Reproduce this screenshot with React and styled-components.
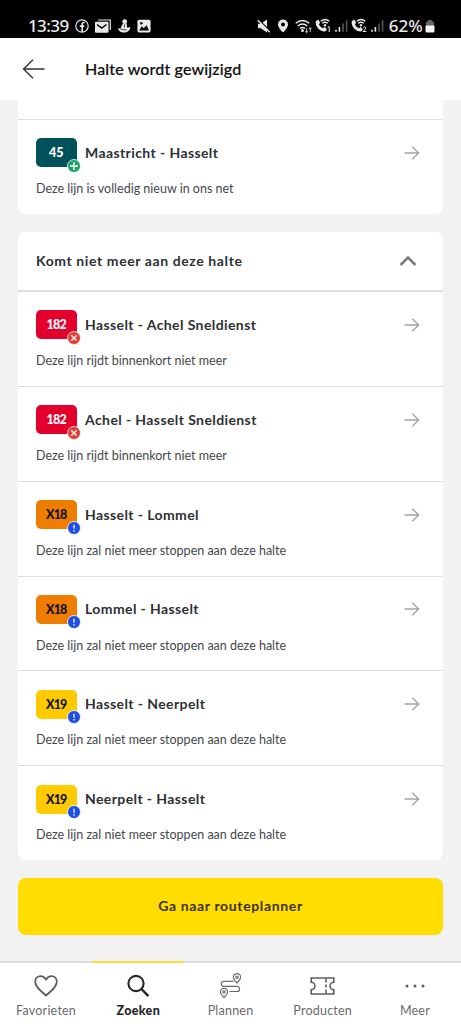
import React from "react";
import styled, { createGlobalStyle } from "styled-components";

const Global = createGlobalStyle`
  * { box-sizing: border-box; }
  body { margin: 0; background: #f2f2f2; font-family: Lato, "Noto Sans", sans-serif; color: #2d3035; }
  svg { display: block; flex: none; }
`;

const Screen = styled.div`
  width: 461px; height: 1024px; display: flex; flex-direction: column;
  overflow: hidden; background: #f2f2f2;
`;
const StatusBar = styled.div`
  flex: none; height: 37.5px; background: #000; color: #e8e8e8; display: flex;
  align-items: center; justify-content: space-between; padding: 14px 26px 0 28px;
`;
const StatusGroup = styled.div`display: flex; align-items: center; gap: ${(p) => p.$gap}px;`;
const StatusText = styled.span`
  font: 500 17px/22px "Noto Sans", sans-serif; letter-spacing: ${(p) => p.$track || 0}px; white-space: nowrap;
  margin: 0 ${(p) => p.$after || 0}px 0 ${(p) => p.$before || 0}px;
`;
const Header = styled.header`
  flex: none; height: 62.2px; background: #fff; display: flex; align-items: center; padding-left: 22px; gap: 40px;
`;
const Title = styled.h1`
  margin: 0; font-size: 16px; line-height: 22px; font-weight: 500; color: #111; letter-spacing: 0.15px;
  -webkit-text-stroke: 0.2px #111;
`;
const Content = styled.main`flex: 1; min-height: 0; overflow: hidden; padding: 0 18px;`;
const Scroller = styled.div`margin-top: -74.65px; display: flex; flex-direction: column; gap: 18.3px;`;
const Card = styled.section`background: #fff; border-radius: 8px; overflow: hidden;`;
const CardHeader = styled.div`
  height: 60px; border-bottom: 2px solid #dedede; display: flex; align-items: center;
  justify-content: space-between; padding: 0 26px 0 18px;
`;
const CardTitle = styled.h2`
  margin: 0; font-size: 14px; line-height: 20px; font-weight: 700; letter-spacing: 0.6px;
`;
const Row = styled.div`
  height: 94.85px; padding: 18.4px 23px 0 18px; border-bottom: 1px solid #dedede;
  &:last-child { height: 93.85px; border-bottom: 0; }
`;
const RowTop = styled.div`display: flex; align-items: center; height: 29px;`;
const Badge = styled.div`
  position: relative; width: 40.5px; height: 29px; border-radius: 5px; margin-right: 8.5px; flex: none;
  display: flex; align-items: center; justify-content: center; font-size: 12.5px; font-weight: 900;
  letter-spacing: ${(p) => p.$track}px;
  background: ${(p) => p.$bg}; color: ${(p) => p.$fg};
`;
const Mark = styled.span`position: absolute; left: 31.2px; top: 20.5px;`;
const RowTitle = styled.div`
  flex: 1; font-size: 14px; line-height: 20px; font-weight: 700; letter-spacing: 0.4px; white-space: nowrap;
`;
const Note = styled.div`
  margin-top: 12.7px; font-size: 12.5px; line-height: 18px; color: #45484c; white-space: nowrap;
`;
const Button = styled.button`
  height: 56.5px; border: 0; border-radius: 8px; background: #ffdd00; color: #3a3020;
  font: 700 14px/20px Lato, sans-serif; letter-spacing: 0.65px; padding: 0 0 1px;
`;
const Nav = styled.nav`flex: none; height: 62.8px; display: flex; background: #fff;`;
const NavItem = styled.div`
  flex: 1; border-top: 2.4px solid ${(p) => (p.$active ? "#f5de38" : "#dedede")}; display: flex;
  flex-direction: column; align-items: center; padding-top: 10px;
  color: ${(p) => (p.$active ? "#22262b" : "#6b6b6b")};
`;
const NavIcon = styled.div`height: 26px; display: flex; align-items: center;`;
const NavLabel = styled.span`
  font-size: 12.5px; line-height: 18px; margin-top: 2.5px; white-space: nowrap;
  font-weight: ${(p) => (p.$active ? 900 : 400)}; letter-spacing: ${(p) => (p.$active ? 0.35 : 0.22)}px;
`;

const markColors = { plus: "#22a06b", cross: "#e63b35", info: "#1d4ee8" };
function StatusMark({ kind }) {
  return (
    <Mark>
      <svg width="14" height="14" viewBox="0 0 14 14" fill="none" stroke="#fff">
        <circle cx="7" cy="7" r="6.5" fill={markColors[kind]} strokeWidth="0.8" />
        {kind === "plus" && <path d="M7 3v8M3 7h8" strokeWidth="1.3" />}
        {kind === "cross" && <path d="m4.2 4.2 5.6 5.6m0-5.6L4.2 9.8" strokeWidth="1.3" />}
        {kind === "info" && <path d="M7 3.7v4.1M7 9v1.4" strokeWidth="1.3" />}
      </svg>
    </Mark>
  );
}

const Arrow = () => (
  <svg width="16" height="14" viewBox="0 0 16 14" fill="none" stroke="#a3a3a3" strokeWidth="1.3">
    <path d="M.5 7h14M8.3.7 14.7 7l-6.4 6.3" />
  </svg>
);

const palette = {
  teal: ["#00525a", "#fff"],
  red: ["#e4002c", "#fff"],
  orange: ["#ef7d00", "#161310"],
  yellow: ["#ffcb00", "#161310"],
};

function Line({ number, color, mark, title, note }) {
  return (
    <Row>
      <RowTop>
        <Badge $bg={palette[color][0]} $fg={palette[color][1]} $track={number.length > 2 ? -0.8 : 0}>
          {number}
          <StatusMark kind={mark} />
        </Badge>
        <RowTitle>{title}</RowTitle>
        <Arrow />
      </RowTop>
      <Note>{note}</Note>
    </Row>
  );
}

const NEW = "Deze lijn is volledig nieuw in ons net";
const GONE = "Deze lijn rijdt binnenkort niet meer";
const SKIP = "Deze lijn zal niet meer stoppen aan deze halte";

const removed = [
  ["182", "red", "cross", "Hasselt - Achel Sneldienst", GONE],
  ["182", "red", "cross", "Achel - Hasselt Sneldienst", GONE],
  ["X18", "orange", "info", "Hasselt - Lommel", SKIP],
  ["X18", "orange", "info", "Lommel - Hasselt", SKIP],
  ["X19", "yellow", "info", "Hasselt - Neerpelt", SKIP],
  ["X19", "yellow", "info", "Neerpelt - Hasselt", SKIP],
];

const CallIcon = ({ n }) => (
  <svg width="17" height="15" viewBox="0 0 17 15" fill="none" stroke="#e8e8e8">
    <path d="M.8 3.200 3.200 1.600l2 3.200-1.300 1.400c.9 2 2.200 3.200 4 4l1.700-1.200 2.400 2.300-1.800 2.200C4.800 13.900-.2 8.500.8 3.200Z" fill="#e8e8e8" stroke="none" />
    <path d="M5.700 3.200q4.300-3.500 8.600 0M7.200 5.300q2.800-2.200 5.600 0" strokeWidth="1.400" />
    <circle cx="10" cy="7.200" r="1.200" fill="#e8e8e8" stroke="none" />
    {n === 1 ? <path d="M12.800 9.400 14.200 8.600V14" strokeWidth="1" /> : <path d="M12.200 9.500q1.600-1.400 2.600 0 .3 1-2.700 4h3.200" strokeWidth="1" />}
  </svg>
);
const Signal = () => (
  <svg width="13" height="13" viewBox="0 0 13 13" strokeWidth="1.600">
    <path d="M1 10.700v2M4.400 8v4.700" stroke="#e8e8e8" />
    <path d="M8 4.500v8.200M11.600 1v11.700" stroke="#555" />
  </svg>
);

const navItems = [
  ["Favorieten", (
    <svg width="26" height="24" viewBox="0 0 26 24" fill="none" stroke="#5d5d5d" strokeWidth="1.800" strokeLinejoin="round">
      <path d="M13 21.500C7.500 16.800 2.200 12.800 2.200 7.700 2.200 4.500 4.500 2.200 7.500 2.200c2.400 0 4.200 1.100 5.500 3.400 1.300-2.300 3.100-3.400 5.500-3.400 3 0 5.300 2.300 5.300 5.500 0 5.100-5.300 9.100-10.800 13.800Z" />
    </svg>
  )],
  ["Zoeken", (
    <svg width="24" height="24" viewBox="0 0 24 24" fill="none" stroke="#22262b" strokeWidth="2.100">
      <circle cx="10" cy="9.500" r="7.600" /><path d="m15.400 15 7 7.200" strokeWidth="2.500" />
    </svg>
  )],
  ["Plannen", (
    <svg width="24" height="26" viewBox="0 0 24 26" fill="none" stroke="#6b6b6b" strokeWidth="1.200">
      <path d="M14.500 8.300H4.700a2.500 2.500 0 0 0 0 5H18a2.600 2.600 0 0 1 0 5.200H10.500" />
      <path d="M18 10c-2-2.200-3.600-3.900-3.600-5.800a3.600 3.600 0 0 1 7.200 0C21.600 6.100 20 7.800 18 10ZM5 24.500c-2-2.200-3.600-3.800-3.600-5.600a3.600 3.600 0 0 1 7.200 0c0 1.800-1.600 3.400-3.600 5.600Z" />
      <circle cx="18" cy="4.200" r="1.200" /><circle cx="5" cy="19" r="1.200" />
    </svg>
  )],
  ["Producten", (
    <svg width="25" height="18" viewBox="0 0 25 18" fill="none" stroke="#5d5d5d" strokeWidth="1.600">
      <path d="M1.200 1h22.600v4.300a3.700 3.700 0 0 0 0 7.400V17H1.200v-4.300a3.700 3.700 0 0 0 0-7.400Z" />
      <path d="M16 1.500v4m0 2v3m0 2v4" />
    </svg>
  )],
  ["Meer", (
    <svg width="20" height="6" viewBox="0 0 20 6" fill="#5d5d5d">
      <circle cx="2" cy="3" r="1.500" /><circle cx="10" cy="3" r="1.500" /><circle cx="18" cy="3" r="1.500" />
    </svg>
  )],
];

export default function App() {
  return (
    <Screen>
      <Global />
      <StatusBar>
        <StatusGroup $gap={6}>
          <StatusText $track={-0.6}>13:39</StatusText>
          <svg width="14" height="14" viewBox="0 0 14 14" fill="none" stroke="#e8e8e8">
            <circle cx="7" cy="7" r="6.200" strokeWidth="1.200" /><path d="M9.700 3.500H8.500Q7.200 3.500 7.200 5v8M4.700 7.200h4.600" strokeWidth="1.700" />
          </svg>
          <svg width="16" height="14" viewBox="0 0 16 14">
            <path d="M3 1h12.300v10" fill="none" stroke="#e8e8e8" strokeWidth="1.200" /><rect x="0" y="2.700" width="13.500" height="11" rx="1" fill="#e8e8e8" />
            <path d="m2 5.500 4.700 3.600 4.800-3.600" fill="none" stroke="#000" strokeWidth="1.400" />
          </svg>
          <svg width="14" height="14" viewBox="0 0 14 14" fill="#e8e8e8">
            <circle cx="7.700" cy="2.600" r="2.400" /><path d="M6.200 4.300h3.400l.6 4.500L13.300 8c0 3.500-2.800 5.500-6.300 5.500-3.400 0-5.600-1.500-6-4.300l2.600.4L5 6Z" />
            <path d="m3.500 10.200 6 .8M7.500 5.500v3" stroke="#000" strokeWidth=".7" />
          </svg>
          <svg width="14" height="14" viewBox="0 0 14 14">
            <rect x=".4" y=".7" width="13.200" height="12.800" rx="1.800" fill="#e8e8e8" /><path d="m2.200 11.500 2.600-4.200 2 2 2.700-3 2.500 5.200Z" fill="#000" /><circle cx="4.300" cy="4.200" r="1.200" fill="#000" />
          </svg>
        </StatusGroup>
        <StatusGroup $gap={3}>
          <StatusGroup $gap={6}>
            <svg width="14" height="14" viewBox="0 0 14 14">
              <path d="M1 4.700h2.800L10 .6v13L3.800 9.300H1Z" fill="#e8e8e8" /><path d="M1.800.8 14 13" stroke="#000" strokeWidth="1.300" /><path d="m.8 1.200 12 12" stroke="#e8e8e8" strokeWidth="1.500" />
            </svg>
            <svg width="12" height="14" viewBox="0 0 12 14">
              <path fillRule="evenodd" d="M6 .5A5 5 0 0 0 1 5.500C1 9 6 13.500 6 13.500S11 9 11 5.500A5 5 0 0 0 6 .5Zm0 3a2 2 0 1 1 0 4 2 2 0 0 1 0-4Z" fill="#e8e8e8" />
            </svg>
            <svg width="17" height="14" viewBox="0 0 17 14" fill="none" stroke="#e8e8e8" strokeWidth="1.400">
              <path d="M.7 4.300q6.800-5.600 13.600 0M2.700 7q4.800-3.900 9.600 0M4.800 9.500q2.700-2.100 5.400 0" /><circle cx="7.500" cy="11.500" r=".8" />
              <path d="M11.600 9.500v4m-1.400-1.200 1.400 1.400 1.400-1.400M15.200 13V8.700m-1.400 1.400 1.400-1.400 1.400 1.400" strokeWidth=".9" />
            </svg>
          </StatusGroup>
          <CallIcon n={1} /><Signal /><CallIcon n={2} /><Signal />
          <StatusText $track={0} $before={2.2} $after={-0.8}>62%</StatusText>
          <svg width="10" height="14" viewBox="0 0 10 14">
            <path d="M3 1h4v1.500h2V7H1V2.500h2Z" fill="#666" /><path d="M.5 6.500h9V12q0 1.500-1.500 1.500H2Q.5 13.500.5 12Z" fill="#f2f2f2" />
          </svg>
        </StatusGroup>
      </StatusBar>
      <Header>
        <svg width="23" height="20" viewBox="0 0 23 20" fill="none" stroke="#333" strokeWidth="1.400">
          <path d="M22.500 10H1.500M11 .8 1.500 10l9.500 9.200" />
        </svg>
        <Title>Halte wordt gewijzigd</Title>
      </Header>
      <Content>
        <Scroller>
          <Card>
            <Row>
              <RowTop />
              <Note>{NEW}</Note>
            </Row>
            <Line number="45" color="teal" mark="plus" title="Maastricht - Hasselt" note={NEW} />
          </Card>
          <Card>
            <CardHeader>
              <CardTitle>Komt niet meer aan deze halte</CardTitle>
              <svg width="18" height="12" viewBox="0 0 18 12" fill="none" stroke="#7c7c7c" strokeWidth="2.500">
                <path d="M1.500 10 9 2.500l7.500 7.500" />
              </svg>
            </CardHeader>
            <div>
              {removed.map(([number, color, mark, title, note]) => (
                <Line key={title} number={number} color={color} mark={mark} title={title} note={note} />
              ))}
            </div>
          </Card>
          <Button>Ga naar routeplanner</Button>
        </Scroller>
      </Content>
      <Nav>
        {navItems.map(([label, icon]) => (
          <NavItem key={label} $active={label === "Zoeken"}>
            <NavIcon>{icon}</NavIcon>
            <NavLabel $active={label === "Zoeken"}>{label}</NavLabel>
          </NavItem>
        ))}
      </Nav>
    </Screen>
  );
}
